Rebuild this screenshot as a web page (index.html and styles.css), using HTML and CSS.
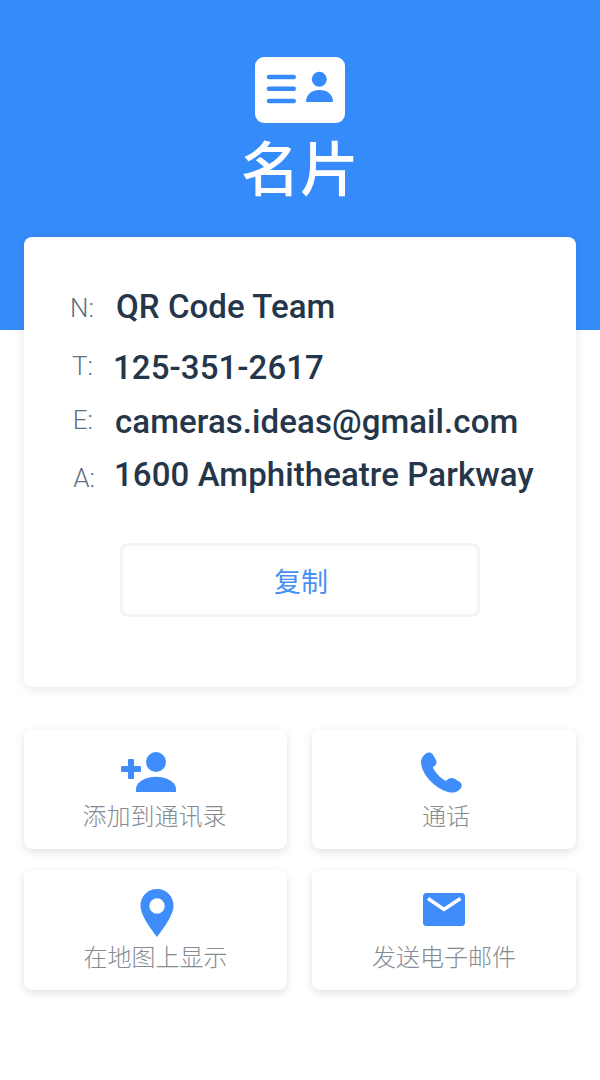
FILE: index.html
```html
<!DOCTYPE html>
<html lang="zh-CN">
<head>
<meta charset="utf-8">
<title>名片</title>
<link rel="stylesheet" href="styles.css">
</head>
<body>
<div class="page">
  <header class="hero">
    <div class="logo">
      <svg class="logo-svg" viewBox="0 0 90 66" width="90" height="66">
        <rect x="11.700" y="17.700" width="29.300" height="4.600" rx="2.300"/>
        <rect x="11.700" y="29.400" width="29.300" height="4.600" rx="2.300"/>
        <rect x="11.700" y="41.700" width="29.300" height="4.600" rx="2.300"/>
        <circle cx="64.300" cy="22.300" r="7.500"/>
        <path d="M51 45c0-7.500 5.500-12 13.500-12S78 37.500 78 45z"/>
      </svg>
    </div>
    <h1 class="title">名片</h1>
  </header>
  <main class="content">
    <section class="card">
      <div class="row row-n"><span class="key">N:</span><span class="val">QR Code Team</span></div>
      <div class="row row-t"><span class="key">T:</span><span class="val">125-351-2617</span></div>
      <div class="row row-e"><span class="key">E:</span><span class="val">cameras.ideas@gmail.com</span></div>
      <div class="row row-a"><span class="key">A:</span><span class="val">1600 Amphitheatre Parkway</span></div>
      <div class="copy"><span class="copy-text">复制</span></div>
    </section>
    <section class="actions">
      <div class="tile">
        <svg class="ico" viewBox="0 0 69 44" width="69" height="44">
          <rect x="0" y="15" width="20" height="6" rx="1"/>
          <rect x="7" y="8" width="6" height="20" rx="1"/>
          <circle cx="35" cy="11" r="10"/>
          <path d="M15 41v-3c0-8 11-12.300 20-12.300S55 30 55 38v3z"/>
        </svg>
        <span class="lbl lbl-add">添加到通讯录</span>
      </div>
      <div class="tile">
        <svg class="ico" viewBox="0 0 60 44" width="60" height="44">
          <path d="M12 2.500c2-1.500 5-1.300 6.500.6l3.500 6c1 2 .6 4-1 5.500l-2.200 2c1.500 3.800 7.800 11 13 13.500l2.500-2c2-1.500 4-1.500 6 -.5l5.500 3.300c2.500 1.800 2.500 5 .4 7-2.500 2.500-5.500 4-9.500 3.600C22 39 8 24 7 12c-.3-4 2-7.500 5-9.500z"/>
        </svg>
        <span class="lbl lbl-call">通话</span>
      </div>
      <div class="tile">
        <svg class="ico ico-pin" viewBox="0 0 34 48" width="34" height="48">
          <path fill-rule="evenodd" d="M17 0C7.500 0 .5 7.500.5 16.500 .5 27 12 41 17 48c5-7 16.500-21 16.500-31.500C33.500 7.500 26.500 0 17 0zm0 9.300a7.700 7.700 0 1 1 0 15.400 7.700 7.700 0 0 1 0-15.400z"/>
        </svg>
        <span class="lbl">在地图上显示</span>
      </div>
      <div class="tile">
        <svg class="ico ico-mail" viewBox="0 0 42 33" width="42" height="33">
          <rect width="42" height="33" rx="3.500"/>
          <path class="flap" d="M5 5.500L21 16.500 37.500 5.500"/>
        </svg>
        <span class="lbl">发送电子邮件</span>
      </div>
    </section>
  </main>
</div>
</body>
</html>
```
FILE: styles.css
```css
* { box-sizing: border-box; }
html, body { margin: 0; padding: 0; background: #fff; }
body { font-family: Roboto, "Noto Sans CJK SC", sans-serif; }
.page { width: 600px; height: 1080px; overflow: hidden; }
.hero {
  height: 330px;
  background: #368bfb;
  display: flex;
  flex-direction: column;
  align-items: center;
  padding-top: 57px;
}
.logo { width: 90px; height: 66px; background: #fff; border-radius: 9px; }
.logo-svg { display: block; fill: #368bfb; }
.title {
  margin: 3px 0 0;
  font: 500 59px/80px "Noto Sans CJK SC", sans-serif;
  color: #fff;
}
.content { margin-top: -93px; padding: 0 24px; display: flex; flex-direction: column; }
.card {
  height: 450px;
  background: #fff;
  border-radius: 8px;
  box-shadow: 0 2px 12px rgba(0, 0, 0, .1);
  padding-top: 48px;
  display: flex;
  flex-direction: column;
}
.row { display: flex; align-items: flex-start; height: 44px; }
.key {
  width: 70px;
  text-align: right;
  font-size: 26px;
  line-height: 44px;
  font-weight: 300;
  color: #5f7082;
}
.val {
  margin-left: 22px;
  font-size: 33px;
  line-height: 44px;
  font-weight: 500;
  letter-spacing: .08px;
  color: #25364a;
  white-space: nowrap;
}
.row-n .key { margin-top: 1px; }
.row-t { margin-top: 17px; }
.row-t .key { width: 69px; margin-top: -2px; }
.row-t .val { margin-left: 20px; }
.row-e { margin-top: 10px; }
.row-e .key { width: 69px; margin-top: -2px; }
.row-a { margin-top: 9px; }
.row-a .key { width: 71px; margin-top: 3px; }
.row-a .val { margin-left: 19px; }
.copy {
  align-self: center;
  margin-top: 46px;
  width: 360px;
  height: 74px;
  border: 3px solid #f3f4f5;
  border-radius: 8px;
  display: flex;
  align-items: center;
  justify-content: center;
  font: 400 27px "Noto Sans CJK SC", sans-serif;
  color: #4a90f2;
}
.copy-text { margin-left: 2px; }
.actions {
  margin-top: 42px;
  display: grid;
  grid-template-columns: 263px 264px;
  column-gap: 25px;
  row-gap: 21px;
}
.tile {
  height: 120px;
  background: #fff;
  border-radius: 8px;
  box-shadow: 0 3px 8px rgba(0, 0, 0, .12);
  display: flex;
  flex-direction: column;
  align-items: center;
  padding-top: 22px;
}
.ico { display: block; fill: #3f8cfb; flex: none; }
.ico-pin { margin: -3px 0 -1px 3px; }
.ico-mail { margin-top: 1px; margin-bottom: 10px; }
.flap { fill: none; stroke: #fff; stroke-width: 3.500; }
.lbl {
  margin-top: 5px;
  font: 300 24px/30px "Noto Sans CJK SC", sans-serif;
  color: #858b92;
  white-space: nowrap;
}
.lbl-add { margin-right: 2px; }
.lbl-call { margin-left: 4px; }
```
